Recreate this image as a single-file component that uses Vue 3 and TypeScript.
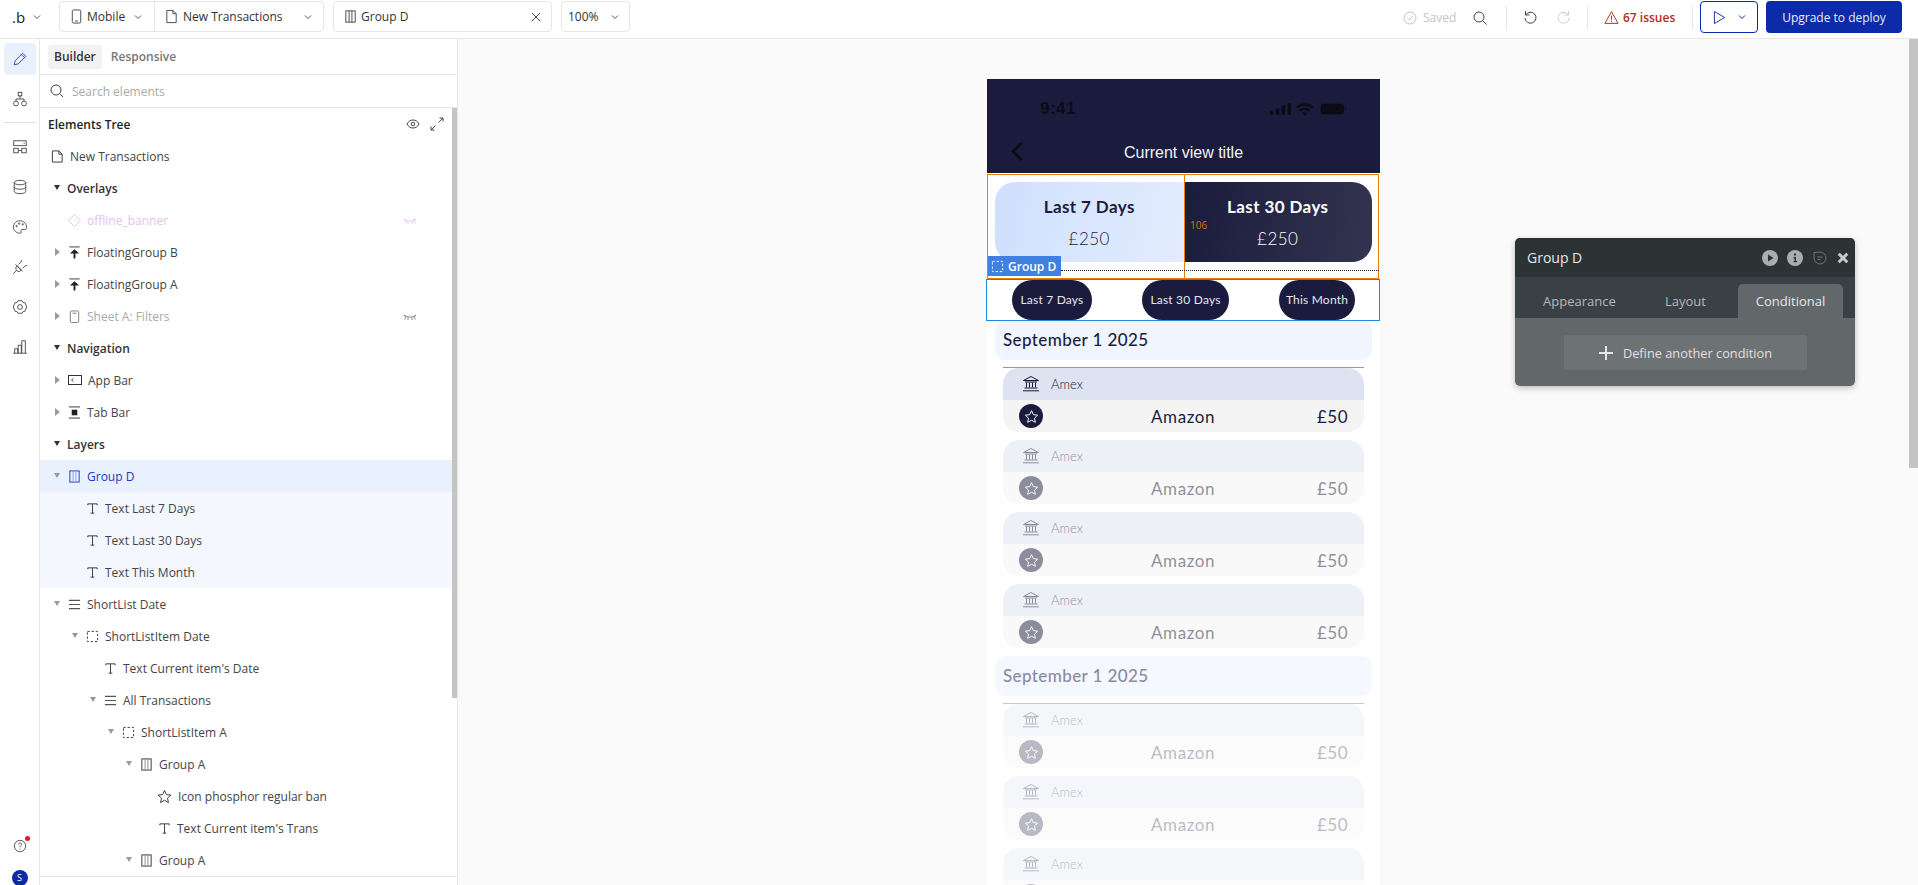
<script setup lang="ts">
interface TreeRow {
  label: string
  level: number
  icon: string
  caret?: 'open' | 'closed'
  tone?: 'pink' | 'muted' | 'selected' | 'child' | 'head'
  hidden?: boolean
}

const rows: TreeRow[] = [
  { label: 'New Transactions', level: -1, icon: 'page' },
  { label: 'Overlays', level: 0, icon: '', caret: 'open', tone: 'head' },
  { label: 'offline_banner', level: 0, icon: 'diamond', tone: 'pink', hidden: true },
  { label: 'FloatingGroup B', level: 0, icon: 'float', caret: 'closed' },
  { label: 'FloatingGroup A', level: 0, icon: 'float', caret: 'closed' },
  { label: 'Sheet A: Filters', level: 0, icon: 'sheet', caret: 'closed', tone: 'muted', hidden: true },
  { label: 'Navigation', level: 0, icon: '', caret: 'open', tone: 'head' },
  { label: 'App Bar', level: 0, icon: 'appbar', caret: 'closed' },
  { label: 'Tab Bar', level: 0, icon: 'tabbar', caret: 'closed' },
  { label: 'Layers', level: 0, icon: '', caret: 'open', tone: 'head' },
  { label: 'Group D', level: 0, icon: 'group', caret: 'open', tone: 'selected' },
  { label: 'Text Last 7 Days', level: 1, icon: 'text', tone: 'child' },
  { label: 'Text Last 30 Days', level: 1, icon: 'text', tone: 'child' },
  { label: 'Text This Month', level: 1, icon: 'text', tone: 'child' },
  { label: 'ShortList Date', level: 0, icon: 'list', caret: 'open' },
  { label: 'ShortListItem Date', level: 1, icon: 'dashed', caret: 'open' },
  { label: "Text Current item's Date", level: 2, icon: 'text' },
  { label: 'All Transactions', level: 2, icon: 'list', caret: 'open' },
  { label: 'ShortListItem A', level: 3, icon: 'dashed', caret: 'open' },
  { label: 'Group A', level: 4, icon: 'group', caret: 'open' },
  { label: 'Icon phosphor regular ban', level: 5, icon: 'star' },
  { label: "Text Current item's Trans", level: 5, icon: 'text' },
  { label: 'Group A', level: 4, icon: 'group', caret: 'open' },
]

const firstDay = [1, 0.5, 0.5, 0.5]
const secondDay = [0.3, 0.3, 0.3]
const pills = ['Last 7 Days', 'Last 30 Days', 'This Month']
</script>

<template>
  <div class="app">
    <header class="toolbar">
      <div class="brand">.b <svg class="chev" viewBox="0 0 10 10"><path d="M2 3.5 5 6.5 8 3.5" /></svg></div>
      <div class="tbox tbox-page">
        <div class="seg seg-device">
          <svg class="ticon" viewBox="0 0 16 16"><rect x="3.5" y="1" width="9" height="14" rx="1.5" /><path d="M6.5 12.8h3" /></svg>
          <span>Mobile</span>
          <svg class="chev" viewBox="0 0 10 10"><path d="M2 3.5 5 6.5 8 3.5" /></svg>
        </div>
        <div class="seg seg-name">
          <svg class="ticon" viewBox="0 0 16 16"><path d="M3 1.5h6.5L13 5v9.5H3zM9.5 1.5V5H13" /></svg>
          <span>New Transactions</span>
          <svg class="chev" viewBox="0 0 10 10"><path d="M2 3.5 5 6.5 8 3.5" /></svg>
        </div>
      </div>
      <div class="tbox tbox-element">
        <svg class="ticon" viewBox="0 0 16 16"><rect x="3" y="2" width="10" height="12" /><path d="M6.500 2v12M9.500 2v12" /></svg>
        <span>Group D</span>
        <svg class="close" viewBox="0 0 10 10"><path d="M1 1 9 9M9 1 1 9" /></svg>
      </div>
      <div class="tbox tbox-zoom">
        <span>100%</span>
        <svg class="chev" viewBox="0 0 10 10"><path d="M2 3.5 5 6.5 8 3.5" /></svg>
      </div>

      <div class="tool-right">
        <svg class="saved-icon" viewBox="0 0 14 14"><circle cx="7" cy="7" r="6" /><path d="M4.3 7.2 6.2 9 9.8 5.2" /></svg>
        <span class="saved">Saved</span>
        <svg class="tool-search" viewBox="0 0 16 16"><circle cx="7" cy="7" r="5" /><path d="M10.7 10.7 14.5 14.5" /></svg>
        <i class="tdiv tdiv-a" />
        <svg class="undo" viewBox="0 0 16 16"><path d="M3.5 3v4h4M3.7 7A5.5 5.5 0 1 1 3 10" /></svg>
        <svg class="undo redo" viewBox="0 0 16 16"><path d="M12.5 3v4h-4M12.3 7A5.5 5.5 0 1 0 13 10" /></svg>
        <i class="tdiv tdiv-b" />
        <svg class="warn" viewBox="0 0 16 15"><path d="M8 1.2 15 13.8H1zM8 5.5v4.5M8 11.2v1.2" /></svg>
        <span class="issues">67 issues</span>
        <i class="tdiv tdiv-c" />
        <div class="play-box">
          <svg class="play" viewBox="0 0 14 16"><path d="M1.5 1.5 12.5 8 1.5 14.5z" /></svg>
          <svg class="chev chev-blue" viewBox="0 0 10 10"><path d="M2 3.5 5 6.5 8 3.5" /></svg>
        </div>
        <div class="deploy">Upgrade to deploy</div>
      </div>
    </header>

    <div class="body">
      <nav class="rail">
        <div class="rail-btn active">
          <svg viewBox="0 0 18 18"><path d="M2.5 15.5 3.5 11 12 2.5l3.5 3.5L7 14.5zM10.5 4l3.5 3.5" /></svg>
        </div>
        <div class="rail-btn">
          <svg viewBox="0 0 18 18"><rect x="7" y="1.5" width="4" height="4" /><rect x="2" y="11.5" width="5" height="5" rx="1.5" /><rect x="11" y="11.5" width="5" height="5" rx="1.5" /><path d="M9 5.5v3.5M4.5 11.5V9h9v2.5" /></svg>
        </div>
        <i class="rail-line" />
        <div class="rail-btn">
          <svg viewBox="0 0 18 18"><rect x="2" y="2" width="14" height="5.5" /><rect x="2" y="10.5" width="5" height="5" /><rect x="11" y="10.5" width="5" height="5" /><path d="M7 13h4M13 4.7h1.5" /></svg>
        </div>
        <div class="rail-btn">
          <svg viewBox="0 0 18 18"><ellipse cx="9" cy="4" rx="6.5" ry="2.5" /><path d="M2.5 4v10c0 1.4 2.9 2.5 6.5 2.5s6.500-1.100 6.500-2.500V4M2.500 9c0 1.400 2.900 2.500 6.500 2.500s6.500-1.100 6.500-2.500" /></svg>
        </div>
        <div class="rail-btn">
          <svg viewBox="0 0 18 18"><path d="M9 2C4.800 2 1.500 5.200 1.500 9S4.800 16 9 16c1.600 0 1.800-1.200 1.200-2-.7-1 0-2.200 1.300-2.200h3c1 0 1.800-.8 1.800-2.300C16.500 5.200 13.200 2 9 2z" /><circle cx="5.200" cy="8" r=".8" /><circle cx="8" cy="5.200" r=".8" /><circle cx="12" cy="6" r=".8" /></svg>
        </div>
        <div class="rail-btn">
          <svg viewBox="0 0 18 18"><path d="M1.500 16.500 5 13M5.500 7.500l5 5c-1.800 1.800-3.700 2-5 .8s-1.800-4 0-5.800zM4 6l8 8M10 3.500 7.500 6M14.500 8 12 10.500M11 1l-1 2.500M17 7l-2.500 1" /></svg>
        </div>
        <div class="rail-btn">
          <svg viewBox="0 0 18 18"><path d="M6.500 2h5l1 2 2.200.2L16.500 9l-1.800 4.800-2.200.2-1 2h-5l-1-2-2.200-.2L1.500 9l1.800-4.800L5.500 4z" /><circle cx="9" cy="9" r="2.700" /></svg>
        </div>
        <div class="rail-btn">
          <svg viewBox="0 0 18 18"><path d="M1.500 16h15M3 16v-5h3.500v5M7 16V7h3.500v9M11 16V2h4v14" /></svg>
        </div>
        <div class="rail-foot">
          <div class="help">
            <svg viewBox="0 0 16 16"><circle cx="8" cy="8" r="6.500" /><path d="M6.200 6.300C6.200 4 9.800 4 9.800 6.200 9.800 7.800 8 7.700 8 9.500M8 11v1" /></svg>
            <i class="dot" />
          </div>
          <div class="avatar">S</div>
        </div>
      </nav>

      <aside class="panel">
        <div class="tabs">
          <span class="tab on">Builder</span>
          <span class="tab">Responsive</span>
        </div>
        <div class="search">
          <svg viewBox="0 0 16 16"><circle cx="7" cy="7" r="5" /><path d="M10.700 10.700 14 14" /></svg>
          <span>Search elements</span>
        </div>
        <div class="tree-wrap">
          <div class="tree">
            <div class="tree-title">
              <span>Elements Tree</span>
              <svg class="mini" viewBox="0 0 14 14"><path d="M1 7c1.500-2.800 3.500-4 6-4s4.500 1.200 6 4c-1.500 2.800-3.500 4-6 4S2.500 9.800 1 7z" /><circle cx="7" cy="7" r="1.800" /></svg>
              <svg class="mini" viewBox="0 0 14 14"><path d="M8.500 5.500 13 1M9.500 1H13v3.500M5.500 8.500 1 13M1 9.500V13h3.500" /></svg>
            </div>
            <div
              v-for="(row, i) in rows"
              :key="i"
              class="row"
              :class="[row.tone, 'lv' + row.level]"
            >
              <i v-if="row.caret" class="caret" :class="row.caret" />
              <svg v-if="row.icon === 'page'" class="ic" viewBox="0 0 14 14"><path d="M1.500 1h7L12 4.500V13H1.500zM8.500 1v3.500H12" /></svg>
              <svg v-else-if="row.icon === 'diamond'" class="ic" viewBox="0 0 14 14"><path d="M7 .5 13.500 7 7 13.500.5 7z" /></svg>
              <svg v-else-if="row.icon === 'float'" class="ic" viewBox="0 0 14 14"><path class="solid" d="M7 3.500 12 8H8v5.500H6V8H2z" /><path d="M1.500 1h11" /></svg>
              <svg v-else-if="row.icon === 'sheet'" class="ic" viewBox="0 0 14 14"><rect x="2.500" y="1" width="9" height="12.500" rx="1.500" /><path d="M5 3.500h4" /></svg>
              <svg v-else-if="row.icon === 'appbar'" class="ic ic-wide" viewBox="0 0 14 10"><rect x=".5" y=".5" width="13" height="9" /><path d="M5 3.500 3.700 5 5 6.500" /></svg>
              <svg v-else-if="row.icon === 'tabbar'" class="ic" viewBox="0 0 14 14"><path d="M1 1h12M1 13h12" /><rect class="solid" x="4" y="4" width="6" height="6" /></svg>
              <svg v-else-if="row.icon === 'group'" class="ic" viewBox="0 0 14 14"><rect x="2" y="1" width="10" height="12" /><path d="M5.500 1v12M8.500 1v12" class="inner" /></svg>
              <svg v-else-if="row.icon === 'text'" class="ic" viewBox="0 0 14 14"><path d="M2 3.500V2h10v1.500M7 2v10M5 12h4" /></svg>
              <svg v-else-if="row.icon === 'list'" class="ic ic-list" viewBox="0 0 14 14"><path d="M1 2.500h12M1 7h12M1 11.500h12" /></svg>
              <svg v-else-if="row.icon === 'dashed'" class="ic" viewBox="0 0 14 14"><rect x="1.500" y="1.500" width="11" height="11" stroke-dasharray="2.500 2" /></svg>
              <svg v-else-if="row.icon === 'star'" class="ic ic-star" viewBox="0 0 16 16"><path d="M8 1.500 10 6l4.800.500-3.600 3.200 1 4.800L8 12l-4.200 2.500 1-4.800L1.200 6.500 6 6z" /></svg>
              <span class="row-label">{{ row.label }}</span>
              <svg v-if="row.hidden" class="lash" viewBox="0 0 14 8"><path d="M1 2c3.500 2.800 8.500 2.800 12 0M1 2l2 2.500-1.500 2M13 2l-2 2.500 1.500 2M5 4.500v2.500M9 4.500v2.500" /></svg>
            </div>
          </div>
          <div class="tree-scroll" />
        </div>
      </aside>

      <main class="canvas">
        <section class="phone">
          <div class="phone-head">
            <div class="status">
              <span class="clock">9:41</span>
              <svg viewBox="0 0 80 14" class="status-icons">
                <rect x="0" y="9" width="3.500" height="4" rx=".6" /><rect x="6" y="6.500" width="3.500" height="6.500" rx=".6" /><rect x="12" y="3.500" width="3.500" height="9.500" rx=".6" /><rect x="18" y="1" width="3.500" height="12" rx=".6" />
                <path d="M26.500 4.800C31.500 0 39.500 0 44.500 4.800l-1.600 1.700C38.800 2.700 32.200 2.700 28.100 6.500zM29.600 8c3.200-3 8.600-3 11.800 0l-1.700 1.700c-2.300-2-6.100-2-8.400 0zM32.800 11.200c1.400-1.200 4-1.200 5.400 0L35.500 13.800z" />
                <rect x="52" y="1.500" width="24" height="11" rx="3.500" />
                <rect x="77" y="5" width="1.500" height="4" rx=".7" opacity=".5" />
              </svg>
            </div>
            <div class="nav">
              <svg class="back" viewBox="0 0 12 20"><path d="M10.500 1.500 2 10l8.500 8.500" /></svg>
              <span>Current view title</span>
            </div>
          </div>

          <div class="summary">
            <div class="card card-light">
              <b>Last 7 Days</b>
              <span>£250</span>
            </div>
            <div class="card card-dark">
              <b>Last 30 Days</b>
              <span>£250</span>
            </div>
          </div>

          <div class="pills">
            <span v-for="p in pills" :key="p" class="pill">{{ p }}</span>
          </div>

          <div class="day-head">September 1 2025</div>
          <i class="day-line" />
          <div class="txns">
            <div v-for="(o, i) in firstDay" :key="i" class="txn" :style="{ opacity: o }">
              <div class="txn-top">
                <svg class="bank" viewBox="0 0 18 18"><path d="M9 1.500 16.500 5.500H1.500zM3 7h12M4.500 7.500v5M7.500 7.500v5M10.500 7.500v5M13.500 7.500v5M2.500 13h13M1 15.800h16" /></svg>
                <span>Amex</span>
              </div>
              <div class="txn-main">
                <span class="star-dot"><svg viewBox="0 0 16 16"><path d="M8 1.800 10 6l4.500.600-3.300 3.100.9 4.500L8 12l-4.100 2.200.9-4.500L1.500 6.600 6 6z" /></svg></span>
                <span class="merchant">Amazon</span>
                <span class="amount">£50</span>
              </div>
            </div>
          </div>

          <div class="day-head day-faded">September 1 2025</div>
          <i class="day-line line-faded" />
          <div class="txns">
            <div v-for="(o, i) in secondDay" :key="i" class="txn" :style="{ opacity: o }">
              <div class="txn-top">
                <svg class="bank" viewBox="0 0 18 18"><path d="M9 1.500 16.500 5.500H1.500zM3 7h12M4.500 7.500v5M7.500 7.500v5M10.500 7.500v5M13.500 7.500v5M2.500 13h13M1 15.800h16" /></svg>
                <span>Amex</span>
              </div>
              <div class="txn-main">
                <span class="star-dot"><svg viewBox="0 0 16 16"><path d="M8 1.800 10 6l4.500.600-3.300 3.100.9 4.500L8 12l-4.100 2.200.9-4.500L1.500 6.600 6 6z" /></svg></span>
                <span class="merchant">Amazon</span>
                <span class="amount">£50</span>
              </div>
            </div>
          </div>

          <!-- selection outlines drawn by the editor on top of the page -->
          <div class="sel-orange" />
          <div class="sel-orange-mid" />
          <span class="sel-num">106</span>
          <div class="sel-dots" />
          <div class="sel-blue" />
          <div class="sel-tag">
            <svg viewBox="0 0 14 14"><rect x="1.500" y="1.500" width="11" height="11" stroke-dasharray="2.500 2" /></svg>
            Group D
          </div>
        </section>

        <div class="inspector">
          <div class="ins-head">
            <span>Group D</span>
            <svg class="ins-ic" viewBox="0 0 16 16"><circle class="solid" cx="8" cy="8" r="8" /><path class="cut" d="M6 4.500v7L11.500 8z" /></svg>
            <svg class="ins-ic" viewBox="0 0 16 16"><circle class="solid" cx="8" cy="8" r="8" /><path class="cut" d="M7 3.500h2v2H7zM6.500 7h2.500v4h1v1.200H6.500V11h1V8.200h-1z" /></svg>
            <svg class="ins-ic ins-note" viewBox="0 0 16 16"><path d="M8 2a6 6 0 1 1-6 6V2.500zM5.500 7h5M5.500 9.500h3" /></svg>
            <svg class="ins-ic ins-x" viewBox="0 0 14 14"><path d="M2 2 12 12M12 2 2 12" /></svg>
          </div>
          <div class="ins-tabs">
            <span class="ins-tab t-app">Appearance</span>
            <span class="ins-tab t-lay">Layout</span>
            <span class="ins-tab t-con">Conditional</span>
          </div>
          <div class="ins-body">
            <div class="ins-btn">
              <svg class="plus" viewBox="0 0 14 14"><path d="M7 0v14M0 7h14" /></svg>
              Define another condition
            </div>
          </div>
        </div>

        <div class="canvas-scroll" />
      </main>
    </div>
  </div>
</template>

<style>
html, body { margin: 0; background: #fff; }
</style>

<style scoped>
.app {
  height: 885px;
  width: 1918px;
  overflow: hidden;
  display: flex;
  flex-direction: column;
  font-family: "Open Sans", "Noto Sans", sans-serif;
  color: #333;
}

/* top bar */
.toolbar {
  height: 39px;
  flex-shrink: 0;
  display: flex;
  align-items: flex-start;
  padding-top: 1px;
  box-sizing: border-box;
  border-bottom: 1px solid #e6e6e6;
  font-size: 12px;
  background: #fff;
}
.toolbar svg { fill: none; stroke: #444; stroke-width: 1; }
.brand {
  width: 59px;
  height: 31px;
  padding-left: 12px;
  box-sizing: border-box;
  display: flex;
  align-items: center;
  gap: 7px;
  font-size: 15px;
  color: #222;
}
.chev { width: 10px; height: 10px; flex-shrink: 0; }
.toolbar .chev { stroke: #555; }
.tbox {
  height: 31px;
  box-sizing: border-box;
  border: 1px solid #e6e6e6;
  border-radius: 4px;
  display: flex;
  align-items: center;
}
.tbox-page { width: 265px; margin-right: 9px; }
.seg { display: flex; align-items: center; height: 100%; box-sizing: border-box; }
.seg-device { width: 95px; padding-left: 9px; border-right: 1px solid #e6e6e6; }
.seg-device span { margin-left: 3px; width: 46px; }
.seg-name { flex: 1; padding-left: 9px; }
.seg-name span { margin-left: 4px; width: 120px; }
.ticon { width: 15px; height: 15px; flex-shrink: 0; }
.tbox-element { width: 219px; padding: 0 10px 0 9px; margin-right: 9px; }
.tbox-element span { margin-left: 3px; flex: 1; }
.close { width: 10px; height: 10px; }
.tbox-zoom { width: 69px; padding-left: 6px; gap: 11px; }
.tool-right { position: relative; flex: 1; height: 36px; }
.tool-right > * { position: absolute; }
.saved-icon { left: 773px; top: 10px; width: 14px; height: 14px; }
.toolbar .saved-icon { stroke: #c4c4c4; }
.saved { left: 793px; top: 8px; color: #c4c4c4; }
.tool-search { left: 842px; top: 9px; width: 16px; height: 16px; }
.tdiv { width: 1px; height: 24px; top: 5px; background: #e6e6e6; }
.tdiv-a { left: 876px; }
.tdiv-b { left: 957px; }
.tdiv-c { left: 1062px; }
.undo { left: 892px; top: 7px; width: 16px; height: 16px; }
.redo { left: 926px; }
.toolbar .redo { stroke: #ccc; }
.warn { left: 974px; top: 9px; width: 15px; height: 15px; }
.toolbar .warn { stroke: #b72a1c; }
.issues { left: 993px; top: 8px; color: #b72a1c; font-weight: 600; }
.play-box {
  left: 1070px;
  top: 0;
  width: 58px;
  height: 32px;
  box-sizing: border-box;
  border: 1px solid #0c2ba8;
  border-radius: 4px;
  display: flex;
  align-items: center;
  padding-left: 12px;
  gap: 11px;
}
.play { width: 13px; height: 15px; }
.toolbar .play { stroke: #0c2ba8; }
.toolbar .chev-blue { stroke: #0c2ba8; }
.deploy {
  left: 1136px;
  top: 0;
  width: 136px;
  height: 32px;
  border-radius: 4px;
  background: #0c2ba8;
  color: #e8ecfa;
  display: flex;
  align-items: center;
  justify-content: center;
}

.body { flex: 1; display: flex; min-height: 0; }

/* left icon rail */
.rail {
  width: 40px;
  flex-shrink: 0;
  box-sizing: border-box;
  border-right: 1px solid #e6e6e6;
  display: flex;
  flex-direction: column;
  align-items: center;
  padding-top: 4px;
  background: #fff;
}
.rail svg { fill: none; stroke: #444; stroke-width: 1; }
.rail-btn {
  width: 32px;
  height: 32px;
  margin-bottom: 8px;
  border-radius: 4px;
  display: flex;
  align-items: center;
  justify-content: center;
}
.rail-btn svg { width: 16px; height: 16px; }
.rail-btn.active { background: #e9f0fe; }
.rail-btn.active svg { stroke: #1a3ac0; }
.rail-line { display: block; width: 32px; height: 1px; background: #e0e0e0; margin: -1px 0 8px; }
.rail-foot { margin-top: auto; display: flex; flex-direction: column; align-items: center; gap: 17px; margin-bottom: -1px; }
.help { position: relative; width: 14px; height: 14px; }
.help svg { width: 14px; height: 14px; display: block; }
.dot { position: absolute; top: -3px; right: -3px; width: 5px; height: 5px; border-radius: 50%; background: #e31b1b; }
.avatar {
  width: 16px;
  height: 16px;
  border-radius: 50%;
  background: #0c2ba8;
  color: #fff;
  font-size: 9px;
  line-height: 16px;
  text-align: center;
}

/* elements panel */
.panel {
  width: 418px;
  flex-shrink: 0;
  box-sizing: border-box;
  border-right: 1px solid #e6e6e6;
  display: flex;
  flex-direction: column;
  background: #fff;
  padding-bottom: 8px;
}
.tabs {
  height: 36px;
  box-sizing: border-box;
  border-bottom: 1px solid #e6e6e6;
  display: flex;
  align-items: center;
  padding-left: 8px;
  gap: 3px;
  font-size: 12px;
  font-weight: 600;
}
.tab { height: 24px; line-height: 24px; padding: 0 6px; border-radius: 3px; color: #777; }
.tab.on { background: #f2f2f2; color: #333; }
.search {
  height: 33px;
  box-sizing: border-box;
  border-bottom: 1px solid #e6e6e6;
  display: flex;
  align-items: center;
  padding-left: 9px;
  gap: 7px;
  font-size: 12px;
  color: #aaa;
}
.search svg { width: 16px; height: 16px; fill: none; stroke: #444; stroke-width: 1; }
.tree-wrap {
  flex: 1;
  min-height: 0;
  display: flex;
  border-bottom: 1px solid #e6e6e6;
  overflow: hidden;
  position: relative;
}
.tree { flex: 1; min-width: 0; }
.tree-scroll { position: absolute; top: 0; right: 0; width: 5px; height: 590px; background: #c4c4c4; }
.tree-title {
  height: 32px;
  display: flex;
  align-items: center;
  padding: 0 13px 0 8px;
  font-size: 12px;
  font-weight: 600;
  color: #222;
  gap: 10px;
  margin-bottom: 0;
}
.tree-title span { flex: 1; }
.mini { width: 14px; height: 14px; fill: none; stroke: #444; stroke-width: 1; }
.row {
  height: 32px;
  position: relative;
  display: flex;
  align-items: center;
  font-size: 12px;
  color: #444;
  width: 412px;
  box-sizing: border-box;
}
.row.lv-1 { padding-left: 11px; gap: 6px; }
.lv0 { --x: 18px; }
.lv1 { --x: 36px; }
.lv2 { --x: 54px; }
.lv3 { --x: 72px; }
.lv4 { --x: 90px; }
.lv5 { --x: 108px; }
.row.lv0, .row.lv1, .row.lv2, .row.lv3, .row.lv4, .row.lv5 { padding-left: calc(var(--x) + 10px); gap: 6px; }
.caret {
  position: absolute;
  left: calc(var(--x) - 4px);
  top: 13px;
  width: 0;
  height: 0;
  border-left: 3.500px solid transparent;
  border-right: 3.500px solid transparent;
  border-top: 5px solid #999;
}
.caret.closed {
  top: 12px;
  left: calc(var(--x) - 3px);
  border-top: 4px solid transparent;
  border-bottom: 4px solid transparent;
  border-left: 5px solid #999;
  border-right: 0;
}
.ic { width: 13px; height: 13px; flex-shrink: 0; fill: none; stroke: #333; stroke-width: 1; }
.ic-wide { width: 14px; height: 10px; }
.ic-star { width: 15px; height: 15px; margin-left: -1px; }
.ic-list { stroke: #555; stroke-width: 1.200; }
.ic .solid { fill: #222; stroke: none; }
.ic .inner { stroke: #888; }
.row.head { padding-left: 27px; font-weight: 600; color: #333; }
.row.head .caret { border-top-color: #333; }
.row.pink { color: #e8c0ee; }
.row.pink .ic { stroke: #e8c0ee; }
.row.muted { color: #aaa; }
.row.muted .ic { stroke: #777; }
.row.selected { background: #e9f0fe; color: #1a3ac0; }
.row.selected .ic { stroke: #1a3ac0; }
.row.selected .inner { stroke: #8aa0e0; }
.row.child { background: #f4f8fe; }
.row-label { white-space: nowrap; }
.lash { position: absolute; right: 35px; top: 13px; width: 14px; height: 8px; fill: none; stroke: #666; stroke-width: .8; }
.pink .lash { stroke: #e0b8e8; }

/* page canvas */
.canvas {
  flex: 1;
  position: relative;
  overflow: hidden;
  background: #fafafa;
  padding: 40px 0 0 529px;
  box-sizing: border-box;
  min-width: 0;
}
.canvas-scroll { position: absolute; right: 0; top: 0; width: 9px; height: 429px; background: #c4c4c4; }

/* the mobile page */
.phone {
  position: relative;
  width: 393px;
  background: #fff;
  font-family: Lato, "Noto Sans", sans-serif;
  color: #1b1c3d;
  padding-bottom: 20px;
}
.phone-head { height: 94px; background: #1b1c3d; }
.status { height: 47px; padding: 20px 32px 0 53px; box-sizing: border-box; display: flex; align-items: flex-start; justify-content: space-between; }
.clock { font: 600 17px "Liberation Sans", sans-serif; color: #0b0b16; line-height: 20px; letter-spacing: .5px; }
.status-icons { width: 78px; height: 14px; margin-top: 3px; fill: #0b0b16; }
.nav { height: 47px; position: relative; display: flex; align-items: center; justify-content: center; font: 16px "Liberation Sans", sans-serif; color: #f2f2f5; padding-top: 6px; box-sizing: border-box; }
.back { position: absolute; left: 24px; top: 15px; width: 12px; height: 21px; fill: none; stroke: #0b0b16; stroke-width: 2.500; }

.summary { display: flex; padding: 9px 8px 18px; }
.card {
  width: 50%;
  height: 80px;
  display: flex;
  flex-direction: column;
  align-items: center;
  padding-top: 14px;
  box-sizing: border-box;
  gap: 10px;
}
.card b { font-size: 17px; line-height: 22px; letter-spacing: .4px; font-weight: 700; }
.card span { font-size: 17px; line-height: 22px; font-weight: 300; letter-spacing: .5px; }
.card-light { background: linear-gradient(100deg, #cfe0fd, #e3ecfe); border-radius: 20px 0 0 20px; color: #1b1c3d; }
.card-dark { background: linear-gradient(100deg, #1b1c3d, #33344f); border-radius: 0 20px 20px 0; color: #fff; }

.pills {
  height: 40px;
  display: flex;
  align-items: center;
  padding: 0 25px;
  justify-content: space-between;
}
.pill {
  height: 40px;
  line-height: 40px;
  width: 80px;
  text-align: center;
  border-radius: 20px;
  background: #1b1c3d;
  color: #e6e6ec;
  font-size: 12px;
  font-weight: 400;
  letter-spacing: .2px;
}
.pill:nth-child(2) { width: 87px; }
.pill:nth-child(3) { width: 76px; }

.day-head {
  height: 40px;
  line-height: 40px;
  margin: 0 8px;
  padding-left: 8px;
  border-radius: 10px;
  background: #f0f5ff;
  font-size: 17px;
  font-weight: 500;
  letter-spacing: .4px;
}
.day-faded { background: #f5f8ff; color: #8a8b9e; margin-top: 8px; }
.day-line { display: block; height: 1px; margin: 7px 16px 0; background: #999; }
.line-faded { background: #c8c8c8; }

.txns { padding: 0 16px; display: flex; flex-direction: column; gap: 8px; }
.txn { height: 64px; border-radius: 16px; overflow: hidden; }
.txn-top {
  height: 32px;
  background: #dde3f0;
  display: flex;
  align-items: center;
  padding-left: 19px;
  gap: 11px;
  font-size: 13px;
  font-weight: 300;
}
.bank { width: 18px; height: 18px; fill: none; stroke: #1b1c3d; stroke-width: 1; }
.txn-main {
  height: 32px;
  background: #f4f4f4;
  display: flex;
  align-items: center;
  padding: 0 16px;
  position: relative;
}
.star-dot {
  width: 24px;
  height: 24px;
  border-radius: 50%;
  background: #1b1c3d;
  display: flex;
  align-items: center;
  justify-content: center;
}
.star-dot svg { width: 15px; height: 15px; fill: none; stroke: #fff; stroke-width: 1; }
.merchant { position: absolute; left: 148px; font-size: 17px; font-weight: 400; letter-spacing: .6px; }
.amount { margin-left: auto; font-size: 17px; letter-spacing: .5px; }

/* selection overlays */
.sel-orange { position: absolute; left: 0; top: 95px; width: 392px; height: 105px; box-sizing: border-box; border: 1px solid #e67e00; }
.sel-orange-mid { position: absolute; left: 197px; top: 95px; width: 1px; height: 105px; background: #e67e00; }
.sel-num { position: absolute; left: 203px; top: 139px; font: 10px "Open Sans", sans-serif; color: #d87000; }
.sel-dots { position: absolute; left: 74px; top: 191px; width: 318px; border-top: 1px dotted #222; }
.sel-blue { position: absolute; left: -1px; top: 200px; width: 394px; height: 42px; box-sizing: border-box; border: 1px solid #2088e0; }
.sel-tag {
  position: absolute;
  left: 1px;
  top: 177px;
  width: 73px;
  height: 20px;
  background: #3f80e0;
  color: #fff;
  font: 600 12px "Open Sans", sans-serif;
  display: flex;
  align-items: center;
  padding-left: 3px;
  gap: 4px;
  box-sizing: border-box;
}
.sel-tag svg { width: 13px; height: 13px; fill: none; stroke: #fff; stroke-width: 1; }

/* floating inspector window */
.inspector {
  position: absolute;
  left: 1057px;
  top: 199px;
  width: 340px;
  height: 148px;
  border-radius: 5px;
  overflow: hidden;
  box-shadow: 0 2px 6px rgba(0, 0, 0, 0.25);
  background: #62676a;
  font-family: "Open Sans", sans-serif;
  font-size: 13px;
  color: #ddd;
}
.ins-head {
  height: 39px;
  background: #2c3335;
  display: flex;
  align-items: center;
  padding: 0 6px 0 12px;
  font-size: 14px;
  color: #e6e6e6;
}
.ins-head span { flex: 1; }
.ins-ic { width: 16px; height: 16px; margin-left: 9px; }
.ins-ic .solid { fill: #a8adaf; }
.ins-ic .cut { fill: #2c3335; }
.ins-note { fill: none; stroke: #6f7577; stroke-width: 1; }
.ins-x { fill: none; stroke: #c8cbcc; stroke-width: 3.500; width: 12px; height: 12px; }
.ins-tabs { height: 41px; background: #3a4144; position: relative; color: #b5b8ba; }
.ins-tab { position: absolute; top: 7px; height: 34px; line-height: 34px; }
.t-app { left: 28px; }
.t-lay { left: 150px; }
.t-con { left: 223px; width: 105px; text-align: center; background: #62676a; border-radius: 5px 5px 0 0; color: #e6e6e6; }
.ins-body { padding: 17px 0 0 49px; }
.ins-btn {
  width: 243px;
  height: 35px;
  box-sizing: border-box;
  background: #6d7274;
  border-radius: 2px;
  display: flex;
  align-items: center;
  justify-content: center;
  gap: 10px;
  font-size: 12.800px;
  color: #e0e0e0;
}
.plus { width: 14px; height: 14px; fill: none; stroke: #e6e6e6; stroke-width: 2; }
</style>
